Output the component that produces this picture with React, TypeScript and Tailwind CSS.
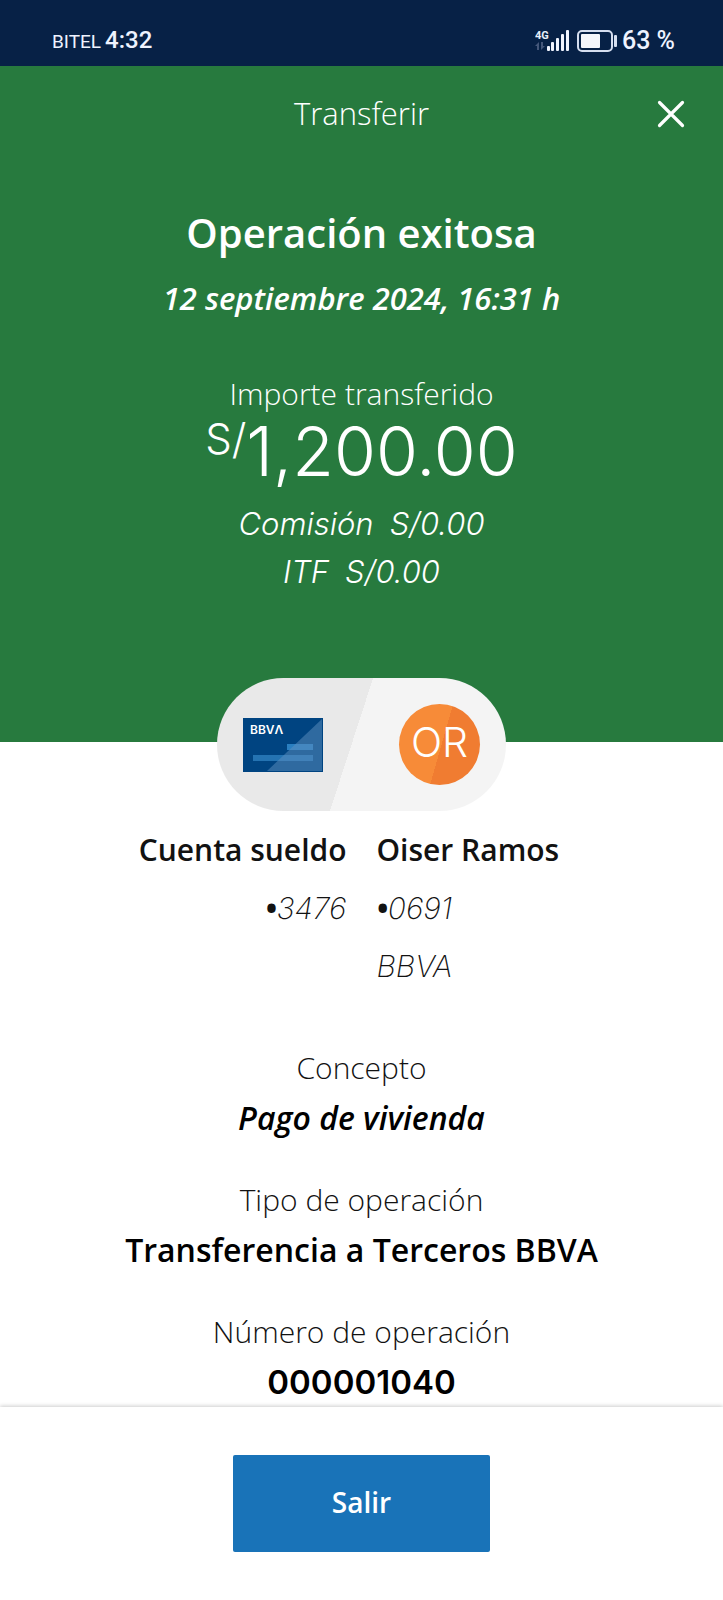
import React from "react";

interface Detail {
  label: string;
  value: string;
  valueClass: string;
}

const details: Detail[] = [
  { label: "Concepto", value: "Pago de vivienda", valueClass: "text-[32px] italic" },
  {
    label: "Tipo de operación",
    value: "Transferencia a Terceros BBVA",
    valueClass: "text-[32px]",
  },
  {
    label: "Número de operación",
    value: "000001040",
    valueClass: "text-[33px] font-[Inter,sans-serif]",
  },
];

function SignalIcon() {
  return (
    <svg width="36" height="24" viewBox="0 0 36 24" aria-hidden="true">
      <text
        x="0"
        y="10"
        fill="#e8eefa"
        fontSize="11"
        fontWeight="700"
        fontFamily="Roboto, sans-serif"
      >
        4G
      </text>
      <g fill="#44577a">
        <path d="M0 17 4 13v8H2v-4z" />
        <path d="M6 13h2v4h2l-4 4z" />
      </g>
      <g fill="#f1f5ff">
        <rect x="12" y="17" width="3" height="5" rx="1" />
        <rect x="16" y="13" width="3" height="9" rx="1" />
        <rect x="21" y="9" width="3" height="13" rx="1" />
        <rect x="26" y="5" width="3" height="17" rx="1" />
        <rect x="31" y="1" width="3" height="21" rx="1" />
      </g>
    </svg>
  );
}

function BatteryIcon() {
  return (
    <svg width="41" height="22" viewBox="0 0 41 22" aria-hidden="true">
      <rect
        x="1"
        y="1"
        width="34"
        height="20"
        rx="4"
        fill="none"
        stroke="#d5deef"
        strokeWidth="2"
      />
      <rect x="4" y="4" width="19" height="14" rx="1" fill="#f4f6fb" />
      <rect x="37" y="5" width="3" height="12" rx="1" fill="#d5deef" />
    </svg>
  );
}

function StatusBar() {
  return (
    <div className="flex h-[66px] items-center justify-between bg-[#072146] pt-4 pr-12 pl-13 font-[Roboto,sans-serif] text-[#eef3ff]">
      <div className="flex items-baseline gap-1 leading-8">
        <span className="text-[19px]">BITEL</span>
        <span className="text-[24px] font-medium">4:32</span>
      </div>
      <div className="flex items-center gap-1.5">
        <SignalIcon />
        <div className="flex items-center gap-1">
          <BatteryIcon />
          <span className="text-[25px] leading-8 font-medium">63 %</span>
        </div>
      </div>
    </div>
  );
}

function CardIcon() {
  return (
    <svg width="80" height="54" viewBox="0 0 80 54" role="img" aria-label="BBVA">
      <rect width="80" height="54" fill="#004481" />
      <rect x="44" y="26" width="26" height="6" fill="#2a7fc0" />
      <rect x="10" y="37" width="60" height="6" fill="#2473b2" />
      <path d="M24 53 79 1v52z" fill="#5e8fc0" fillOpacity="0.5" />
      <text
        x="7"
        y="16"
        fill="#fff"
        fontSize="12"
        fontWeight="600"
        fontFamily="Inter, sans-serif"
      >
        BBVΛ
      </text>
    </svg>
  );
}

function AccountNumber({ digits }: { digits: string }) {
  return (
    <p className="font-[Inter,sans-serif] font-extralight italic">
      <span className="font-['Open_Sans',sans-serif] font-bold">•</span>
      {digits}
    </p>
  );
}

export default function App() {
  return (
    <div className="flex min-h-screen flex-col bg-white font-['Open_Sans',sans-serif]">
      <StatusBar />

      <header className="flex flex-col items-center bg-[#277a3e] px-8 pt-[23px] pb-[146px] text-center text-white">
        <div className="grid w-full grid-cols-[1fr_auto_1fr] items-center">
          <h1 className="col-start-2 text-[31px] leading-[48px] font-light">Transferir</h1>
          <button type="button" aria-label="Cerrar" className="justify-self-end p-1">
            <svg width="32" height="32" viewBox="0 0 32 32" aria-hidden="true">
              <path
                d="M4.500 5.500 27.500 28.500M27.500 5.500 4.500 28.500"
                stroke="#fff"
                strokeWidth="3.200"
                strokeLinecap="round"
              />
            </svg>
          </button>
        </div>

        <h2 className="mt-[68px] text-[40px] leading-[56px] font-semibold">Operación exitosa</h2>
        <p className="mt-[13px] text-[31px] leading-[48px] font-semibold italic">
          12 septiembre 2024, 16:31 h
        </p>

        <p className="mt-12 text-[30px] leading-[48px] font-light">Importe transferido</p>
        <p className="flex items-start font-[Inter,sans-serif] font-light">
          <span className="text-[42px] leading-[42px]">S/</span>
          <span className="text-[68px] leading-[66px]">1,200.00</span>
        </p>
        <p className="mt-4 flex gap-4 font-[Inter,sans-serif] text-[31px] leading-[48px] font-light italic">
          <span>Comisión</span>
          <span>S/0.00</span>
        </p>
        <p className="flex gap-4 font-[Inter,sans-serif] text-[31px] leading-[48px] font-light italic">
          <span>ITF</span>
          <span>S/0.00</span>
        </p>
      </header>

      <main className="flex grow flex-col items-center text-[#121212]">
        <div className="-mt-16 flex h-[133px] w-[289px] items-center justify-between rounded-full bg-[linear-gradient(108deg,#e9e9e9_47%,#f4f4f4_47%)] px-[26px]">
          <CardIcon />
          <span className="flex size-[81px] items-center justify-center rounded-full bg-[linear-gradient(106deg,#f78b38_52%,#f07c31_52%)] pb-1 font-[Inter,sans-serif] text-[41px] font-light text-white">
            OR
          </span>
        </div>

        <div className="mt-[10px] grid w-full grid-cols-2 gap-x-[30px] text-[30px] leading-[58px]">
          <div className="text-right">
            <p className="font-semibold">Cuenta sueldo</p>
            <AccountNumber digits="3476" />
          </div>
          <div>
            <p className="font-semibold">Oiser Ramos</p>
            <AccountNumber digits="0691" />
            <p className="font-[Inter,sans-serif] font-extralight italic">BBVA</p>
          </div>
        </div>

        <dl className="mt-12 flex flex-col gap-8 text-center leading-[50px]">
          {details.map((detail) => (
            <div key={detail.label}>
              <dt className="text-[30px] font-light">{detail.label}</dt>
              <dd className={`font-semibold text-black ${detail.valueClass}`}>{detail.value}</dd>
            </div>
          ))}
        </dl>
      </main>

      <footer className="sticky bottom-0 flex justify-center bg-white py-12 shadow-[0_-1px_4px_rgba(0,0,0,0.2)]">
        <button
          type="button"
          className="h-[97px] w-[257px] rounded-xs bg-[#1973b8] pb-1 text-[28px] font-semibold text-white"
        >
          Salir
        </button>
      </footer>
    </div>
  );
}
